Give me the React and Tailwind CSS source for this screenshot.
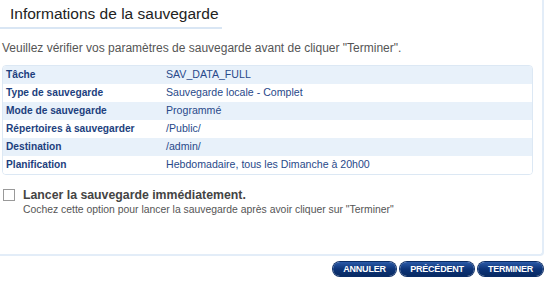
const rows = [
  ['Tâche', 'SAV_DATA_FULL'],
  ['Type de sauvegarde', 'Sauvegarde locale - Complet'],
  ['Mode de sauvegarde', 'Programmé'],
  ['Répertoires à sauvegarder', '/Public/'],
  ['Destination', '/admin/'],
  ['Planification', 'Hebdomadaire, tous les Dimanche à 20h00'],
];

function NavButton({ label, width }) {
  return (
    <button
      className={`h-[14px] ${width} rounded-full bg-gradient-to-b from-[#2b5aa8] via-[#0d3478] to-[#082a63] text-white text-[9px] font-bold leading-[14px] tracking-tight shadow-[0_0_0_1px_#0a2c66]`}
    >
      {label}
    </button>
  );
}

export default function App() {
  return (
    <div className="w-[550px] h-[282px] bg-white overflow-hidden font-['Liberation_Sans',Arial,sans-serif]">
      <div className="w-[544px] h-[256px] border-r-2 border-b-2 border-[#e3edf8] rounded-br-[4px] flex flex-col">
        <div className="w-[222px] border-b-2 border-[#d9e6f4] pl-[10px] pt-[4px] pb-[4px]">
          <h2 className="text-[15.5px] leading-[19px] whitespace-nowrap text-[#222]">Informations de la sauvegarde</h2>
        </div>

        <p className="mt-[12px] pl-[2px] text-[12px] leading-[15px] text-[#555]">
          Veuillez vérifier vos paramètres de sauvegarde avant de cliquer "Terminer".
        </p>

        <div className="mt-[9px] ml-[2px] w-[531px] border border-[#dce8f4] rounded-[4px] overflow-hidden">
          {rows.map(([label, value], i) => (
            <div
              key={label}
              className={`flex h-[18px] items-center ${i % 2 === 0 ? 'bg-[#e8f1fa]' : 'bg-white'}`}
            >
              <div className="w-[163px] pl-[3px] text-[10.2px] font-bold text-[#1d3f7e]">{label}</div>
              <div className="text-[10.6px] text-[#28498a]">{value}</div>
            </div>
          ))}
        </div>

        <div className="mt-[12px] flex items-start gap-[8px] pl-[3px]">
          <div className="mt-[2px] w-[12px] h-[12px] border border-[#999] bg-white" />
          <div>
            <div className="text-[12.3px] leading-[16px] font-bold text-[#444]">Lancer la sauvegarde immédiatement.</div>
            <div className="text-[10.4px] leading-[13px] text-[#555]">
              Cochez cette option pour lancer la sauvegarde après avoir cliquer sur "Terminer"
            </div>
          </div>
        </div>
      </div>

      <div className="flex justify-end gap-[4px] pr-[7px] mt-[6px]">
        <NavButton label="ANNULER" width="w-[63px]" />
        <NavButton label="PRÉCÉDENT" width="w-[74px]" />
        <NavButton label="TERMINER" width="w-[65px]" />
      </div>
    </div>
  );
}
